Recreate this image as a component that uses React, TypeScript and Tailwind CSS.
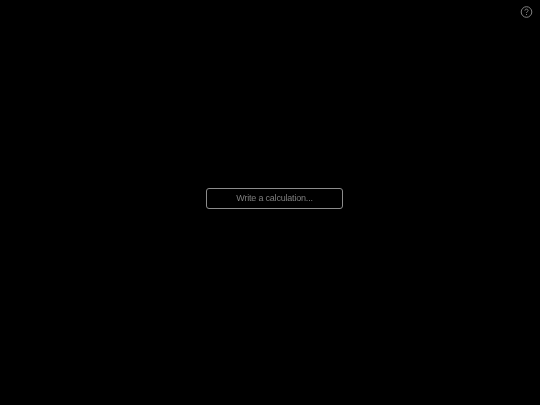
import React from "react";

export default function App() {
  return (
    <div className="relative h-[405px] w-[540px] overflow-hidden bg-black font-['Liberation_Sans',Arial,sans-serif]">
      <button className="absolute left-[520px] top-[6px] flex h-[13px] w-[13px] items-center justify-center" aria-label="Help">
        <svg width="13" height="13" viewBox="0 0 13 13" fill="none" stroke="#808080" strokeWidth="1">
          <circle cx="6.5" cy="6" r="5.3" />
          <path d="M4.9 4.6C4.9 3.7 5.6 3.1 6.5 3.1C7.4 3.1 8.1 3.7 8.1 4.5C8.1 5.5 6.5 5.8 6.5 7" />
          <path d="M6.5 8V9" />
        </svg>
      </button>
      <div className="flex pl-[206px] pt-[188px]">
        <div className="flex h-[21px] w-[137px] items-center justify-center rounded-[3px] border border-[#8c8c8c] bg-black text-[#808080]">
          <span className="text-[9px] leading-none tracking-[-0.2px] opacity-[0.99] [will-change:opacity]">Write a calculation...</span>
        </div>
      </div>
    </div>
  );
}
